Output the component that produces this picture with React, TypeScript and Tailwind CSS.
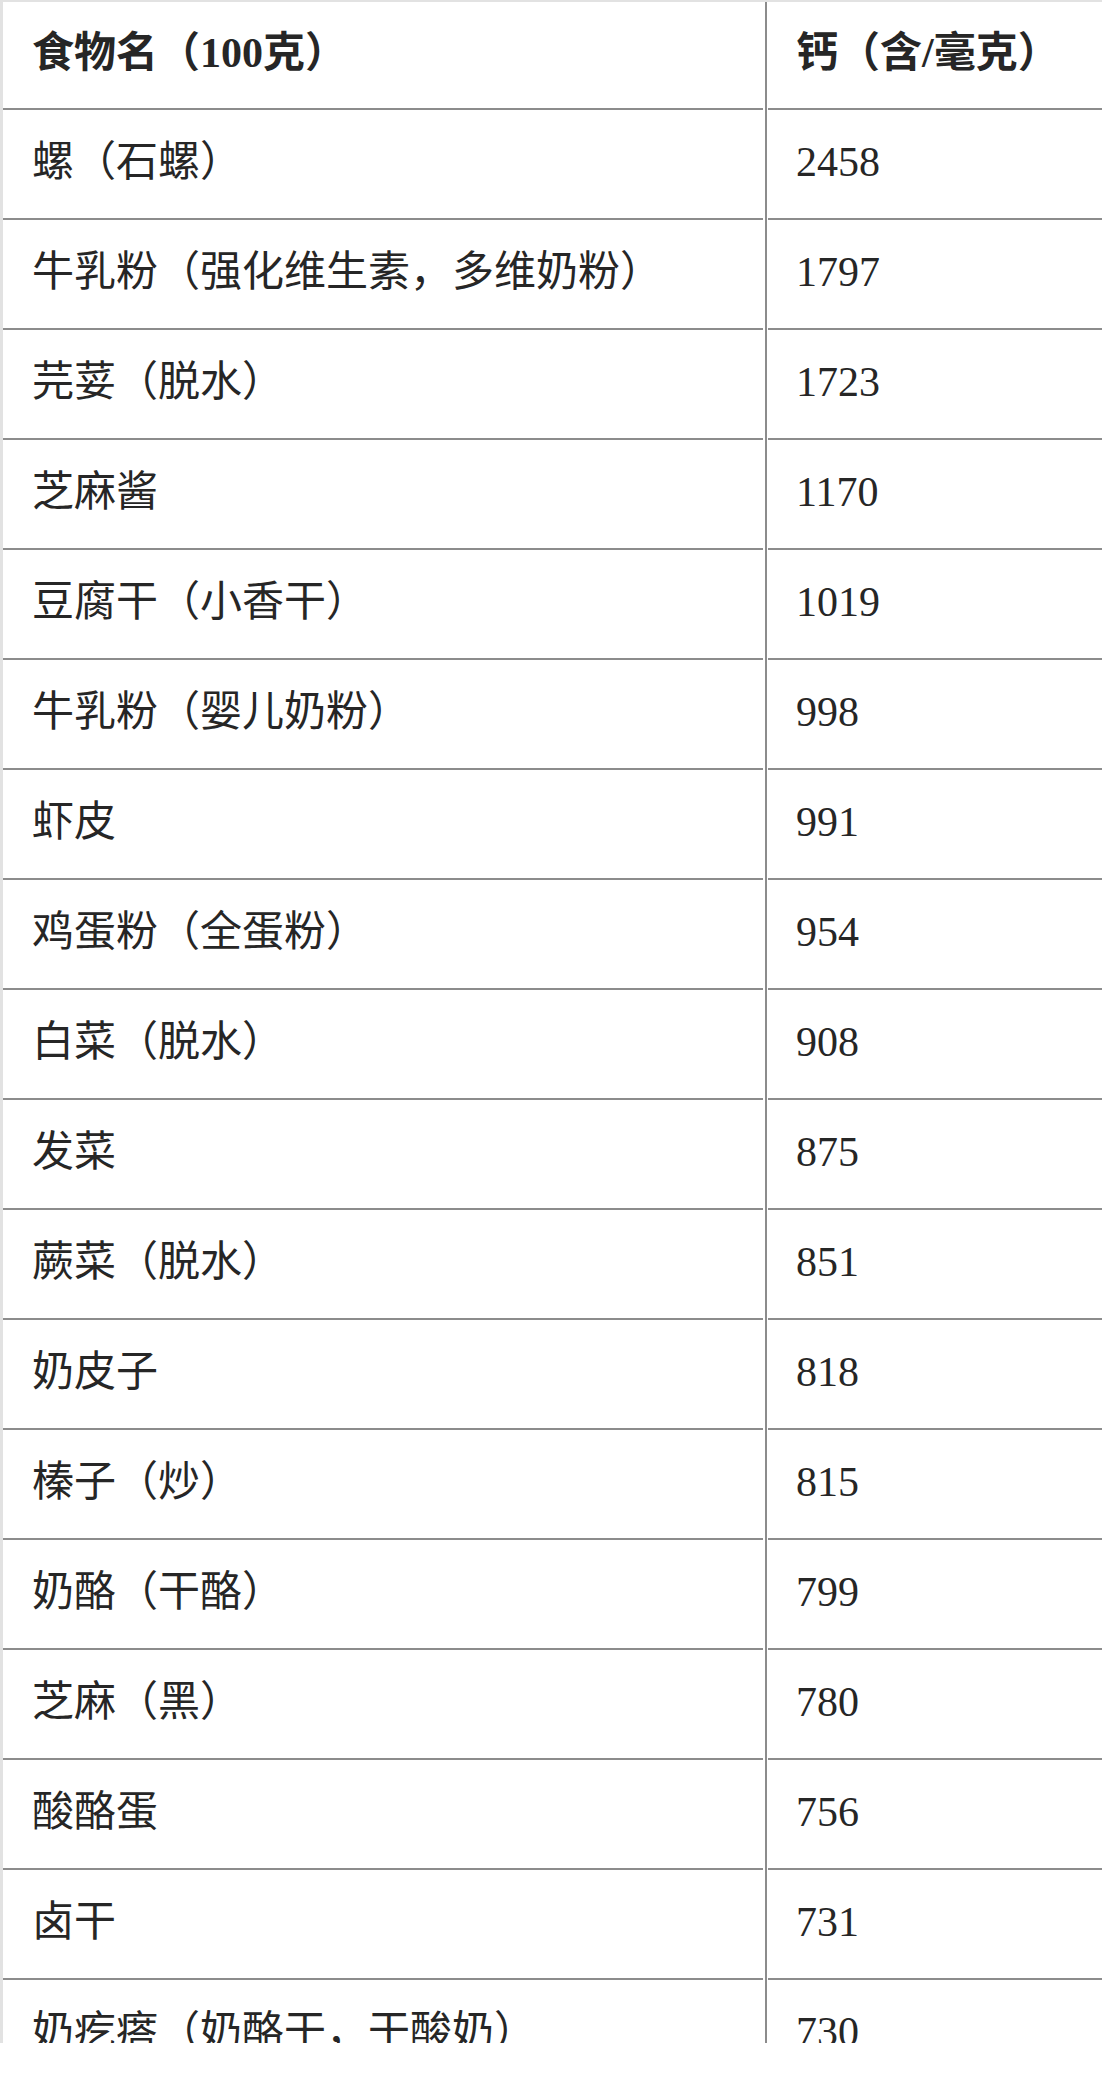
const rows: [string, string][] = [
  ['螺（石螺）', '2458'],
  ['牛乳粉（强化维生素，多维奶粉）', '1797'],
  ['芫荽（脱水）', '1723'],
  ['芝麻酱', '1170'],
  ['豆腐干（小香干）', '1019'],
  ['牛乳粉（婴儿奶粉）', '998'],
  ['虾皮', '991'],
  ['鸡蛋粉（全蛋粉）', '954'],
  ['白菜（脱水）', '908'],
  ['发菜', '875'],
  ['蕨菜（脱水）', '851'],
  ['奶皮子', '818'],
  ['榛子（炒）', '815'],
  ['奶酪（干酪）', '799'],
  ['芝麻（黑）', '780'],
  ['酸酪蛋', '756'],
  ['卤干', '731'],
  ['奶疙瘩（奶酪干，干酸奶）', '730'],
];

export default function App() {
  return (
    <div className="w-[1102px] h-[2093px] bg-white">
      <div
        className="h-[2043px] overflow-hidden flex border-l-[3px] border-t-2 border-[#e2e2e2] text-[42px] leading-[42px] text-[#262626]"
        style={{ fontFamily: '"Liberation Serif", "Noto Sans CJK SC", serif' }}
      >
        {/* food name column */}
        <div className="w-[760px] shrink-0 mr-[2px]">
          <div className="h-[108px] flex items-center pl-[29px] pb-[4px] font-bold border-b-2 border-[#8c8c8c]">
            食物名（100克）
          </div>
          {rows.map(([name]) => (
            <div key={name} className="h-[110px] flex items-center pl-[29px] pb-[4px] border-b-2 border-[#8c8c8c]">
              {name}
            </div>
          ))}
        </div>

        <div className="w-[2px] shrink-0 bg-[#8c8c8c]" />

        {/* calcium column */}
        <div className="flex-1 ml-[1px]">
          <div className="h-[108px] flex items-center pl-[28px] pb-[4px] font-bold border-b-2 border-[#8c8c8c]">
            钙（含/毫克）
          </div>
          {rows.map(([name, ca]) => (
            <div key={name} className="h-[110px] flex items-center pl-[28px] pb-[4px] border-b-2 border-[#8c8c8c]">
              {ca}
            </div>
          ))}
        </div>
      </div>
    </div>
  );
}
